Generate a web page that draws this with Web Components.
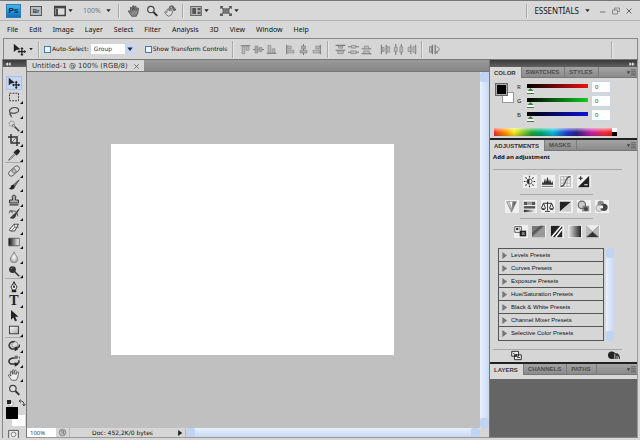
<!DOCTYPE html>
<html lang="en">
<head>
<meta charset="utf-8">
<title>Untitled-1 @ 100% (RGB/8)</title>
<style>
html,body{margin:0;height:100%;overflow:hidden}
body{font:7px/10px "Noto Sans","Liberation Sans",sans-serif;color:#222;background:#d6d6d6}
</style>
</head>
<body>
<ps-app></ps-app>
<script>
const ICONS = {
move:'<path d="M1 1v10l3-2.500 5-.7z" fill="#222"/><path d="M11 6v9M6.500 10.500h9" stroke="#222" stroke-width="1.600"/><path d="M11 5l2 2.500H9zM11 16l2-2.500H9zM5.500 10.500L8 8.500v4zM16 10.500l-2.500-2v4z" fill="#222"/>',
marquee:'<path d="M2 3h12v10H2z" fill="none" stroke="#333" stroke-width="1.300" stroke-dasharray="2.500 1.500"/>',
lasso:'<path d="M4 10C0 7 3 2 9 2s7 5 2 7-6-1-8 1 3 2 1 5" fill="none" stroke="#444" stroke-width="1.500"/>',
wand:'<circle cx="5" cy="5" r="3.500" fill="none" stroke="#666" stroke-dasharray="2 1.500" stroke-width="1.200"/><path d="M6 6l9 9" stroke="#444" stroke-width="2.200"/><path d="M6 6l3 3" stroke="#fff"/>',
crop:'<path d="M4 0v12h12M0 4h12v12" fill="none" stroke="#333" stroke-width="2"/><path d="M4 12L14 2" stroke="#555"/>',
dropper:'<path d="M10 3l3 3 2-3-2-2zM8 4l4 4" stroke="#222" stroke-width="2" fill="#222"/><path d="M9 6l-7 7-1 2 2-1 7-7" fill="#fff" stroke="#333"/>',
heal:'<g transform="rotate(-42 8 8)"><rect x="-.5" y="4.500" width="17" height="7" rx="3.500" fill="#ddd" stroke="#555" stroke-width="1.200"/><path d="M5 5v6h6V5z" fill="#888"/><path d="M6.500 6.500h3v3h-3z" fill="#ccc"/></g>',
brush:'<path d="M15 1L7 8l2 2z" fill="#888" stroke="#333"/><path d="M8 8c-3-1-4 1-5 4l-2 1c4 2 8 1 8-3z" fill="#222"/>',
stamp:'<path d="M6 8V5.500a2.500 2.500 0 1 1 4 0V8h4v4H2V8z" fill="#aaa" stroke="#333" stroke-width="1.300"/><path d="M2 14.500h12" stroke="#333" stroke-width="1.600"/>',
history:'<path d="M15 1L8 9l2 1zM8 9c-2 0-2 3-5 4 4 2 7 0 7-3z" fill="#444" stroke="#333"/><path d="M2 4h6c4 0 4 3 5 7M1 7l3-4 2 4" fill="none" stroke="#555" stroke-width="1.300"/>',
eraser:'<path d="M2 10L8 3h6l-5 9H3z" fill="#eee" stroke="#444" stroke-width="1.300"/><path d="M8 3l1 4h5M9 7l-5 5" fill="none" stroke="#555"/>',
gradient:'<linearGradient id="g"><stop stop-color="#111"/><stop offset="1" stop-color="#fff"/></linearGradient><path d="M1 3h14v10H1z" fill="url(#g)" stroke="#444"/>',
drop:'<radialGradient id="g"><stop stop-color="#fff"/><stop offset="1" stop-color="#aaa"/></radialGradient><path d="M8 1c1 4 5 6 5 10a5 4.500 0 0 1-10 0c0-4 4-6 5-10z" fill="url(#g)" stroke="#777"/>',
dodge:'<circle cx="6" cy="6" r="4.500" fill="#333"/><path d="M8 8l7 7" stroke="#333" stroke-width="2"/><path d="M4 5l2-1" stroke="#aaa"/>',
pen:'<path d="M8 1l4 7-2 4H6L4 8z" fill="#eee" stroke="#333" stroke-width="1.300"/><path d="M8 1v7" stroke="#222"/><circle cx="8" cy="8" r="1.300" fill="#222"/><path d="M5 13.500h6" stroke="#222" stroke-width="3"/>',
path:'<path d="M4 0v13l3-3 2.500 5 2.500-1-2.500-5H14z" fill="#222"/>',
shape:'<linearGradient id="g" y2="1"><stop stop-color="#fff"/><stop offset="1" stop-color="#aaa"/></linearGradient><path d="M2 3h12v10H2z" fill="url(#g)" stroke="#444" stroke-width="1.400"/>',
orbit:'<circle cx="9" cy="6" r="4" fill="#ddd" stroke="#777"/><path d="M9 2C1 2-1 9 5 12h6M15 6c1 3-2 5-5 4" fill="none" stroke="#333" stroke-width="2"/><path d="M9 9l5 3-5 3z" fill="#222"/>',
camera:'<path d="M9 1h4v4H9zM14 3l2-1.500v4z" fill="#666"/><path d="M9 4C1 3-1 10 4 12h7M14 7c2 3-1 5-4 4" fill="none" stroke="#333" stroke-width="2"/><path d="M9 9.500l5 3-5 3z" fill="#222"/>',
hand:'<path d="M5 15C3 12 1 10 .5 8c1-1 2 0 3.500 1.500L3 3.500c1-1 2-.5 2.500 2L6 7V1.500c1-1 2-.7 2 .3V7l1-5c1-1 2-.3 2 1l-.5 4.500L12.500 4c1-.5 2 0 1.500 1.500L13 11l-2 4z" fill="var(--hand,#eee)" stroke="#444" stroke-width="1"/>',
zoom:'<circle cx="6.500" cy="6" r="4.300" fill="#ddd" stroke="#444" stroke-width="1.600"/><path d="M10 9.500l5 5" stroke="#333" stroke-width="2.800"/>',
rotate:'<path d="M6 15c-3-2-5-4-5-6 1-1 2 0 3 1L4 6l2-1 1 3V4l2 1v3l2-2 1 1-2 6z" fill="#ddd" stroke="#555"/><path d="M7 3c3-3 7-2 7 3M11 1l-4 2 3 2M12 5l2 3 2-3" fill="#666" stroke="#555" stroke-width="1.300"/>',
layout:'<path d="M1 2h14v12H1z" fill="#ddd" stroke="#444" stroke-width="2"/><path d="M1 3h14" stroke="#444" stroke-width="3"/><path d="M4 5v9" stroke="#444" stroke-width="2.500"/>',
arrange:'<path d="M1 2h14v12H1z" fill="#bbb" stroke="#666" stroke-width="1.500"/><path d="M3 4h5v8H3zM10 4h4v3h-4zM10 9h4v3h-4z" fill="#555"/>',
screen:'<path d="M1 5V2h3M12 2h3v3M15 11v3h-3M4 14H1v-3M1 2l3 3M15 2l-3 3M1 14l3-3M15 14l-3-3" fill="none" stroke="#555" stroke-width="1.500"/><path d="M4 5h8v6H4z" fill="#777" stroke="#555"/>',
alTop:'<path d="M1 2.500h14" stroke="#777" stroke-width="1.600"/><path d="M3 4h4v10H3zM9 4h4v5H9z" fill="#bbb" stroke="#888"/>',
alMid:'<path d="M0 8h16" stroke="#777" stroke-width="1.500"/><path d="M3 3h4v10H3zM9 5h4v6H9z" fill="#aaa" stroke="#888"/>',
alBot:'<path d="M1 13.500h14" stroke="#777" stroke-width="1.600"/><path d="M3 2h4v10H3zM9 7h4v5H9z" fill="#bbb" stroke="#888"/>',
alL:'<path d="M2.500 1v14" stroke="#777" stroke-width="1.600"/><path d="M4 3h5v4H4zM4 9h9v4H4z" fill="#bbb" stroke="#888"/>',
alC:'<path d="M8 0v16" stroke="#777" stroke-width="1.500"/><path d="M5 3h6v4H5zM3 9h10v4H3z" fill="#aaa" stroke="#888"/>',
alR:'<path d="M13.500 1v14" stroke="#777" stroke-width="1.600"/><path d="M7 3h5v4H7zM3 9h9v4H3z" fill="#bbb" stroke="#888"/>',
dsT:'<path d="M1 2h14M1 9h14" stroke="#777" stroke-width="1.500"/><path d="M5 3h6v3H5zM4 10h8v4H4z" fill="#bbb" stroke="#888"/>',
dsM:'<path d="M0 4h16M0 12h16" stroke="#777" stroke-width="1.500"/><path d="M5 2h6v4H5zM4 10h8v4H4z" fill="#bbb" stroke="#888"/>',
dsB:'<path d="M1 7h14M1 14h14" stroke="#777" stroke-width="1.500"/><path d="M5 3h6v4H5zM4 10h8v4H4z" fill="#bbb" stroke="#888"/>',
dsL:'<path d="M2 1v14M9 1v14" stroke="#777" stroke-width="1.500"/><path d="M3 5h3v6H3zM10 4h4v8h-4z" fill="#bbb" stroke="#888"/>',
dsC:'<path d="M4 0v16M12 0v16" stroke="#777" stroke-width="1.500"/><path d="M2 5h4v6H2zM10 4h4v8h-4z" fill="#bbb" stroke="#888"/>',
dsR:'<path d="M7 1v14M14 1v14" stroke="#777" stroke-width="1.500"/><path d="M3 5h4v6H3zM10 4h4v8h-4z" fill="#bbb" stroke="#888"/>',
auto:'<path d="M5 1v14M9 1v14" stroke="#777" stroke-width="1.800"/><path d="M1 4h3v8H1zM11 4c5 0 5 7 0 8M13 10l-3 2 3 2" fill="none" stroke="#777" stroke-width="1.300"/>',
bright:'<circle cx="8" cy="8" r="3.200" fill="#fff" stroke="#333"/><path d="M8 5a3 3 0 0 0 0 6z" fill="#222"/><path d="M8 1v2M8 13v2M1 8h2M13 8h2M3 3l1.500 1.500M11.500 11.500L13 13M13 3l-1.500 1.500M3 13l1.500-1.500" stroke="#333" stroke-width="1.400"/>',
levels:'<path d="M1 12l1-4 1 2 2-6 1 5 2-7 2 7 1-4 2 5 1-3 1 5z" fill="#333"/><path d="M1 14h14" stroke="#555"/>',
curves:'<path d="M2 2h12v12H2zM6 2v12M10 2v12M2 6h12M2 10h12" fill="none" stroke="#999" stroke-width=".8"/><path d="M2 14c8 0 4-12 12-12" fill="none" stroke="#444" stroke-width="1.300"/>',
exposure:'<path d="M15 1v14H1z" fill="#222"/><path d="M2 4h5M4.500 1.500v5" stroke="#222" stroke-width="1.300"/><path d="M9 12h4" stroke="#fff" stroke-width="1.300"/>',
vibrance:'<linearGradient id="g"><stop stop-color="#eee"/><stop offset="1" stop-color="#444"/></linearGradient><path d="M2 2h12L8 15z" fill="url(#g)" stroke="#888"/><path d="M6 2h3L8 10z" fill="#fff"/>',
hue:'<linearGradient id="g"><stop stop-color="#222"/><stop offset="1" stop-color="#eee"/></linearGradient><path d="M1 2h4v4H1zM11 2h4v4h-4z" fill="#555"/><path d="M5 2h6v4H5z" fill="#999"/><path d="M1 7.500h14v3H1z" fill="#555"/><path d="M1 12h14v3H1z" fill="url(#g)"/>',
balance:'<path d="M8 2v11M3 4h10M5 14h6M3 4l-2.500 6M3 4l2.500 6M13 4l-2.500 6M13 4l2.500 6" stroke="#222" stroke-width="1.100" fill="none"/><path d="M0 10h6c-1 3-5 3-6 0zM10 10h6c-1 3-5 3-6 0z" fill="#333"/>',
bw:'<path d="M1 2h14L1 14z" fill="#222"/><path d="M15 2v12H1z" fill="#ccc"/>',
photo:'<circle cx="6" cy="6" r="4.500" fill="#ccc" stroke="#666" stroke-width="1.500"/><path d="M7 7h8v7H6z" fill="#777" opacity=".8"/><circle cx="11" cy="11" r="2.500" fill="#444"/>',
mixer:'<circle cx="7" cy="5" r="4" fill="#888"/><circle cx="5" cy="10" r="4" fill="#ddd" stroke="#999"/><circle cx="11" cy="9" r="4.500" fill="#444"/><circle cx="8" cy="8.500" r="2" fill="#fff"/>',
invert:'<path d="M1 2h8v7H1z" fill="#fff" stroke="#333"/><path d="M7 7h8v7H7z" fill="#222"/><circle cx="4" cy="5" r="1.500" fill="#222"/><path d="M6 3l2 4M10 9l3 3M10 12l3-3" stroke="#999" stroke-width="1.500"/>',
poster:'<path d="M0 1h16v14H0z" fill="#777"/><path d="M0 15L16 1v14z" fill="#999"/><path d="M0 10L10 1h4L0 13z" fill="#555"/>',
thresh:'<path d="M1 1h14v14H1z" fill="#222"/><path d="M2 15L14 1M7 15L15 5" stroke="#fff" stroke-width="2"/>',
gmap:'<linearGradient id="g"><stop stop-color="#eee"/><stop offset="1" stop-color="#222"/></linearGradient><path d="M0 1h16v14H0z" fill="url(#g)"/>',
selcol:'<path d="M0 1h16v14H0z" fill="#bbb"/><path d="M0 1l8 7 8-7z" fill="#eee"/><path d="M0 15l8-7 8 7z" fill="#333"/><path d="M0 1l16 14M16 1L0 15" stroke="#999"/>',
expand:'<path d="M1 2h10v7H1zM5 7h10v7H5z" fill="#eee" stroke="#222" stroke-width="1.300"/><path d="M3 4l5 5M8 6v3H5M9 11h4" stroke="#222" stroke-width="1.300" fill="none"/>',
clip:'<circle cx="5" cy="7" r="5" fill="#222"/><path d="M8 4c6-1 8 3 8 8H7z" fill="#333"/><path d="M9 5v7M12 8v4M14 9v3" stroke="#ddd"/>',
min:'<path d="M2 10h11" stroke="#666" stroke-width="1.800"/>',
restore:'<path d="M5 6V2h10v7h-4M1 6h10v8H1z" fill="none" stroke="#777" stroke-width="1.500"/>',
close:'<path d="M3 3l10 10M13 3L3 13" stroke="#666" stroke-width="2"/>',
down:'<path d="M1 4h14l-7 9z" fill="#222"/>',
right:'<path d="M3 0v16l11-8z" fill="currentColor"/>',
menu:'<path d="M0 6h5L2.500 10zM7 3h9M7 6h9M7 9h9M7 12h9" fill="#333" stroke="#555" stroke-width="1.200"/>',
ff:'<path d="M1 3v10l7-5zM8 3v10l7-5z" fill="#ddd"/>',
swatches:'<path d="M6 6h8v8H6z" fill="#fff" stroke="#777"/><path d="M2 2h8v8H2z" fill="#222"/>',
swap:'<path d="M4 4c6 0 8 2 8 8M6 1L2 4l4 3M9 10l3 4 3-4" fill="none" stroke="#333" stroke-width="1.700"/>',
mask:'<path d="M1 2h14v13H1z" fill="#eee" stroke="#444" stroke-width="1.300"/><circle cx="8" cy="8" r="3.500" fill="none" stroke="#555"/>',
globe:'<circle cx="8" cy="8" r="6" fill="#bbb" stroke="#888" stroke-width="1.500"/><path d="M5 5h5v6M8 8l4 4" stroke="#777" fill="none" stroke-width="1.500"/>'
};
const define = (name, html) => customElements.define(name, class extends HTMLElement {
  constructor(){
    super();
    this.attachShadow({mode:'open'});
  }
  connectedCallback(){
    const t = document.createElement('template');
    t.innerHTML = '<style>*{box-sizing:border-box}:host{box-sizing:border-box}button,input,select{font:inherit;color:inherit;margin:0;padding:0;border:0;border-radius:0;background:none}button{display:grid;place-items:center}</style>' + (typeof html === 'function' ? html(this) : html);
    this.shadowRoot.replaceChildren(t.content.cloneNode(true));
  }
});
const at = (e, n, d='') => e.getAttribute(n) ?? d;

define('ps-icon', e => `<style>:host{display:block;width:${at(e,'size','12')}px;height:${at(e,'size','12')}px;flex:none}svg{display:block;width:100%;height:100%}</style><svg viewBox="0 0 16 16" aria-hidden="true">${ICONS[at(e,'name')]}</svg>`);

define('ps-button', e => `<style>:host{display:block;width:${at(e,'w','12')}px;flex:none}button{width:100%}</style><button aria-label="${at(e,'label',at(e,'name'))}"><ps-icon name="${at(e,'name')}" size="${at(e,'size','12')}"></ps-icon></button>`);

define('ps-rule', `<style>:host{display:block;width:2px;height:14px;border-left:1px solid #aaa;border-right:1px solid #e6e6e6;flex:none}</style>`);

define('ps-appbar', `<style>
:host{display:flex;align-items:center;height:21px;padding:0 5px 0 6px;background:#d8d8d8;border-top:1px solid #777;border-bottom:1px solid #b4b4b4}
.logo{width:15px;height:14px;background:linear-gradient(#45b5ee,#1273b8);border:1px solid #2c7cb4;color:#06284a;font:bold 8px/12px "Liberation Sans",sans-serif;text-align:center}
.br{width:12px;height:10px;margin:0 11px 0 9px;background:#bbb;border:1px solid #555;font:bold 6px/8px "Liberation Sans",sans-serif;color:#333}
.zoom{margin:0 4px 0 9px;color:#777}
ps-rule{margin:0 5px}
.ws{margin-left:6px;margin-right:4px;color:#111;font-size:8px}
.fill{flex:1}
.win{display:flex;gap:1px;margin-left:6px}
</style>
<div class="logo">Ps</div><button class="br">Br</button>
<ps-button name="layout" label="View extras" w="13"></ps-button><ps-button name="down" label="Extras menu" size="5" w="8"></ps-button>
<span class="zoom">100%</span><ps-button name="down" label="Zoom level" size="5" w="8"></ps-button>
<ps-rule></ps-rule>
<ps-button style="--hand:#888" name="hand" w="18" size="12"></ps-button><ps-button name="zoom" w="18"></ps-button><ps-button name="rotate" label="Rotate view" w="18"></ps-button>
<ps-rule style="margin-left:3px"></ps-rule>
<ps-button name="arrange" label="Arrange documents" w="14"></ps-button><ps-button name="down" label="Arrange menu" size="5" w="8"></ps-button>
<ps-button style="margin-left:8px" name="screen" label="Screen mode" w="14"></ps-button><ps-button name="down" label="Screen menu" size="5" w="8"></ps-button>
<span class="fill"></span><ps-rule style="margin:0"></ps-rule><button class="ws">ESSENTİALS</button><ps-button name="down" label="Workspaces" size="5" w="8"></ps-button>
<div class="win"><ps-button name="min" label="Minimize" size="8"></ps-button><ps-button name="restore" label="Restore" size="8"></ps-button><ps-button name="close" label="Close" size="8"></ps-button></div>`);

define('ps-menubar', `<style>:host{display:block;background:#d8d8d8}nav{display:flex;gap:11px;align-items:center;height:17px;padding-left:7px;color:#111}</style>
<nav aria-label="Main menu">${'File,Edit,Image,Layer,Select,Filter,Analysis,3D,View,Window,Help'.split(',').map(t=>`<button>${t}</button>`).join('')}</nav>`);

define('ps-check', `<style>:host{display:block;flex:none}label{display:flex;align-items:center;gap:1px;white-space:nowrap}input{appearance:none;width:7px;height:7px;background:#eef3fa;border:1px solid #4a78b4}</style><label><input type="checkbox"><slot></slot></label>`);

const group = (names, ml) => `<div class="g" style="margin-left:${ml}px">${names.split(' ').map(n=>`<ps-button name="${n}" size="11" w="12"></ps-button>`).join('')}</div>`;
define('ps-options', `<style>
:host{display:flex;align-items:center;height:21px;margin:0 2px 0 3px;padding-left:8px;background:#d6d6d6;border:1px solid #888;border-width:1px 1px 0 1px;font:6px/8px "DejaVu Sans",sans-serif;color:#111}
ps-rule{height:17px}
.g{display:flex;gap:1px}
select{appearance:none;display:block;width:44px;height:10px;margin:0 10px 0 2px;padding:0 3px;background:#fff;color:#335;font-family:"DejaVu Sans",sans-serif;line-height:10px}
.sel{position:relative}
.sel ps-icon{position:absolute;right:10px;top:0;padding:2px;background:#c5d6f6;box-sizing:border-box;pointer-events:none}
</style>
<ps-button name="move" label="Move tool" size="13" w="14"></ps-button><ps-button name="down" label="Tool presets" size="4" w="10"></ps-button>
<ps-rule style="margin:0 4px 0 2px"></ps-rule>
<ps-check>Auto-Select:</ps-check>
<div class="sel"><select aria-label="Auto-Select"><option>Group</option><option>Layer</option></select><ps-icon name="down" size="10"></ps-icon></div>
<ps-check>Show Transform Controls</ps-check>
<ps-rule style="margin-left:5px"></ps-rule>
${group('alTop alMid alBot',5)}${group('alL alC alR',7)}
<ps-rule style="margin-left:5px"></ps-rule>
${group('dsT dsM dsB',5)}${group('dsL dsC dsR',7)}
<ps-rule style="margin-left:4px"></ps-rule>
${group('auto',5)}
<ps-rule style="margin-left:auto;margin-right:24px"></ps-rule>`);

define('ps-dockhead', `<style>:host{display:flex;align-items:center;height:7px;background:linear-gradient(#3a3a3a,#606060);padding:0 2px;justify-content:var(--side,flex-end)}ps-icon{transform:var(--flip,none)}</style><ps-icon name="ff" size="6"></ps-icon>`);

define('ps-tool', e => `<style>:host{display:grid;place-items:center}
button{position:relative;width:16px;height:14px}
button.on{background:#c4d8f4;outline:1px solid #a9c2e8;outline-offset:-1px}
button.more::after{content:"";position:absolute;right:-1px;bottom:0;width:0;height:0;border-left:3px solid transparent;border-bottom:3px solid #111}
.t{font:bold 14px/14px "Liberation Serif",serif}</style>
<button aria-label="${at(e,'name')}" class="${e.hasAttribute('on')?'on':''} ${e.hasAttribute('plain')?'':'more'}">${at(e,'name')==='type'?'<span class="t">T</span>':`<ps-icon name="${at(e,'name')}" size="12"></ps-icon>`}</button>`);

const tools = (h, s) => `<div class="tools" style="height:${h}px">${s.split(' ').map(n=>{const[a,...b]=n.split(':');return `<ps-tool name="${a}" ${b.join(' ')}></ps-tool>`}).join('')}</div>`;
define('ps-toolbox', `<style>
:host{display:flex;flex-direction:column;background:#d6d6d6;border-right:1px solid #777;overflow:hidden;--side:flex-start;--flip:scaleX(-1)}
ps-dockhead{flex:none;margin-bottom:9px}
.tools{display:grid;grid-auto-rows:1fr;padding-right:1px;flex:none}
hr{width:18px;height:1px;border:0;margin:0 2px 1px;background:#aaa;flex:none}
.mini{display:flex;gap:4px;padding:2px 3px 0;flex:none}
.sw{display:grid;grid-template:8px 11px/6px 6px 7px;padding-left:3px;flex:none}
.fg{grid-area:1/1/3/3;background:#000;height:12px;z-index:1}
.bg{grid-area:2/2/3/4;background:#fff;height:11px}
ps-icon.m{margin:3px 0 0 5px}
</style>
<ps-dockhead></ps-dockhead>
${tools(86,'move:on:plain marquee lasso wand crop dropper')}<hr>
${tools(114,'heal brush stamp history eraser gradient drop dodge')}<hr>
${tools(57,'pen type path shape')}<hr>
${tools(58,'orbit camera hand zoom:plain')}
<div class="mini"><ps-button name="swatches" size="8" w="8"></ps-button><ps-button name="swap" size="8" w="8"></ps-button></div>
<div class="sw"><button class="fg" aria-label="Foreground"></button><button class="bg" aria-label="Background"></button></div>
<ps-icon class="m" name="mask" size="11"></ps-icon>`);

define('ps-scroll', e => e.hasAttribute('h')
 ? `<style>:host{display:block;height:9px;flex:1;background:linear-gradient(#e8f0fc,#c7d9f3);border-left:1px solid #bbb}div{height:100%;display:flex;justify-content:space-between}i{width:9px;background:#c0d4f2;border-radius:2px}</style><div><i></i><i></i></div>`
 : `<style>:host{display:block;background:linear-gradient(90deg,#e8f0fc,#c7d9f3)}div{height:100%;display:flex;flex-direction:column;justify-content:space-between}i{height:10px;background:#c0d4f2;border-radius:2px}</style><div><i></i><i></i></div>`);

define('ps-document', `<style>
:host{display:grid;grid-template:12px 1fr 10px/1fr 9px;min-width:0;min-height:0}
.tabs{grid-column:1/3;background:linear-gradient(#9a9a9a,#868686);border-bottom:1px solid #777;display:flex}
.tab{display:flex;align-items:center;gap:5px;padding:1px 4px 0 5px;background:#d8d8d8;font:7px/10px "DejaVu Sans",sans-serif;color:#333}
.canvas{background:#c0c0c0;display:grid;place-items:center;overflow:hidden;padding:0 2px 2px 0}
.page{width:283px;aspect-ratio:283/211;background:#fff}
.status{grid-column:1/3;display:flex;align-items:center;background:#d6d6d6;border-bottom:1px solid #999}
.status input{width:29px;height:9px;padding-left:3px;background:#fff;color:#247;font-size:6px}
.doc{width:106px;border-left:1px solid #bbb;text-align:center;font:6px/9px "DejaVu Sans",sans-serif;color:#111}
.corner{width:9px}
</style>
<div class="tabs"><div class="tab"><span>Untitled-1 @ 100% (RGB/8)</span><ps-button name="close" label="Close document" size="7" w="7"></ps-button></div></div>
<div class="canvas"><div class="page"></div></div><ps-scroll></ps-scroll>
<div class="status"><input aria-label="Zoom" value="100%"><ps-button name="globe" label="Version Cue" size="9" w="13"></ps-button><div class="doc">Doc: 452,2K/0 bytes</div><ps-button name="right" label="Status menu" size="6" w="10"></ps-button><ps-scroll h></ps-scroll><span class="corner"></span></div>`);

define('ps-panel', e => `<style>
:host{display:flex;flex-direction:column;min-height:0}
.tabs{display:flex;height:11px;flex:none;background:linear-gradient(#a4a4a4,#8a8a8a);border-bottom:1px solid #777}
.tabs button{padding:0 5px 0 4px;border-right:1px solid #7c7c7c;font:bold 6px/10px "Liberation Sans",sans-serif;color:#4c4c4c}
.tabs button[aria-selected=true]{background:#d8d8d8;color:#333;height:11px}
ps-button{margin:0 1px 0 auto;align-self:center}
</style><div class="tabs" role="tablist">${at(e,'tabs').split(',').map((t,i)=>`<button role="tab" aria-selected="${i===0}">${t}</button>`).join('')}<ps-button name="menu" label="Panel menu" size="9" w="10"></ps-button></div><slot></slot>`);

define('ps-channel', e => `<style>
:host{display:block}
label{display:grid;grid-template-columns:7px 1fr 20px;column-gap:3px;align-items:center;height:14px}
span{font-size:6px}
input[type=range]{appearance:none;width:100%;height:14px;background:linear-gradient(90deg,#000,${at(e,'color')}) 0 4px/100% 4px no-repeat}
input[type=range]::-webkit-slider-thumb{appearance:none;width:7px;height:6px;margin-top:8px;background:linear-gradient(#497a49 3px,#f4f8f2 3px 5px,#497a49 5px);clip-path:polygon(50% 0,100% 60%,100% 100%,0 100%,0 60%)}
input.v{width:20px;height:12px;padding-left:3px;background:#fff;border:1px solid #c9d6e6;font-size:6px;color:#333}
</style><label><span>${at(e,'name')}</span><input type="range" min="0" max="255" value="0"><input class="v" aria-label="${at(e,'name')} value" value="0"></label>`);

define('ps-color', `<style>
:host{display:block;background:#d6d6d6;height:60px;padding:2px 20px 2px 4px}
.row{display:grid;grid-template-columns:23px 1fr;padding-right:6px;height:48px}
.sw{display:grid;grid-template:9px 11px/7px 6px 6px;padding:3px 0 0 1px}
.fg{grid-area:1/1/3/3;background:#000;border:1px solid #666;outline:1px solid #aaa;outline-offset:-2px;width:13px;height:13px;z-index:1}
.bg{grid-area:2/2/3/4;background:#fff;border:1px solid #999}
.ch{display:grid;align-content:start}
.ramp{display:grid;grid-template-columns:1fr 5px;height:8px}
.spec{background:linear-gradient(#fff9,#fff0 50%,#0003),linear-gradient(90deg,#e33,#f90 10%,#fe2 17%,#2a3 32%,#0a7 40%,#1bd 50%,#23c 63%,#328 70%,#c2a 83%,#e34 93%,#e22)}
.bw{background:linear-gradient(#fff 50%,#000 50%)}
</style><div class="row"><div class="sw"><button class="fg" aria-label="Foreground"></button><button class="bg" aria-label="Background"></button></div>
<div class="ch"><ps-channel name="R" color="#e11"></ps-channel><ps-channel name="G" color="#1c2"></ps-channel><ps-channel name="B" color="#11d"></ps-channel></div></div>
<div class="ramp"><div class="spec"></div><div class="bw"></div></div>`);

const row = s => `<div class="r">${s.split(' ').map(n=>`<ps-button name="${n}" size="13" w="14"></ps-button>`).join('')}</div>`;
define('ps-adjust', `<style>
:host{display:flex;flex-direction:column;background:#d6d6d6;height:211px;font-size:6px}
h2{font:bold 6px/9px "Noto Sans",sans-serif;color:#111;margin:2px 3px 7px}
hr{border:0;height:1px;margin:0;background:#a8a8a8;flex:none}
.full{margin:0 15px 0 3px}.short{margin:0 44px 0 30px}
.r{display:flex;justify-content:center;gap:4px;height:24px;align-items:center;padding-right:14px}
.r ps-button{background:#f0f0f0}
.box{display:grid;grid-template-columns:1fr 8px;gap:2px;margin:5px 23px 0 8px}
ul{list-style:none;margin:0;padding:0;border:1px solid #555}
li{height:13px;border-bottom:1px solid #555}li:last-child{border:0}
li button{display:flex;align-items:center;gap:3px;width:100%;height:12px;padding-left:2px;color:#111;font:6px/12px "Liberation Sans",sans-serif}
li ps-icon{color:#777}
.foot{display:flex;justify-content:space-between;padding:0 17px 0 20px}
</style><h2>Add an adjustment</h2><hr class="full">
${row('bright levels curves exposure')}<hr class="short">${row('vibrance hue balance bw photo mixer')}<hr class="short">${row('invert poster thresh gmap selcol')}
<div class="box"><ul>${'Levels,Curves,Exposure,Hue/Saturation,Black &amp; White,Channel Mixer,Selective Color'.split(',').map(t=>`<li><button><ps-icon name="right" size="7"></ps-icon>${t} Presets</button></li>`).join('')}</ul><ps-scroll></ps-scroll></div>
<hr class="full" style="margin-top:8px"><div class="foot"><ps-button name="expand" size="11"></ps-button><ps-button name="clip" size="12"></ps-button></div>`);

define('ps-layers', `<style>:host{display:block;flex:1;background:#656565;border-top:4px solid #d8d8d8}</style>`);

define('ps-dock', `<style>
:host{display:flex;flex-direction:column;min-height:0;border-left:1px solid #777;border-right:1px solid #999;border-bottom:1px solid #888;background:#222;row-gap:2px}
ps-dockhead{margin-bottom:-2px;flex:none}
ps-panel{flex:none}ps-panel.last{flex:1}
</style><ps-dockhead></ps-dockhead>
<ps-panel tabs="COLOR,SWATCHES,STYLES"><ps-color></ps-color></ps-panel>
<ps-panel tabs="ADJUSTMENTS,MASKS"><ps-adjust></ps-adjust></ps-panel>
<ps-panel class="last" tabs="LAYERS,CHANNELS,PATHS"><ps-layers></ps-layers></ps-panel>`);

define('ps-app', `<style>
:host{display:grid;grid-template-rows:auto auto auto minmax(0,1fr);height:100vh;padding-bottom:2px;background:#d6d6d6}
main{display:grid;grid-template-columns:24px minmax(0,1fr) 149px;min-height:0;margin:0 2px 0 2px;border-left:1px solid #888;border-top:1px solid #777}
</style><ps-appbar></ps-appbar><ps-menubar></ps-menubar><ps-options></ps-options>
<main><ps-toolbox></ps-toolbox><ps-document></ps-document><ps-dock></ps-dock></main>`);
</script>
</body>
</html>
